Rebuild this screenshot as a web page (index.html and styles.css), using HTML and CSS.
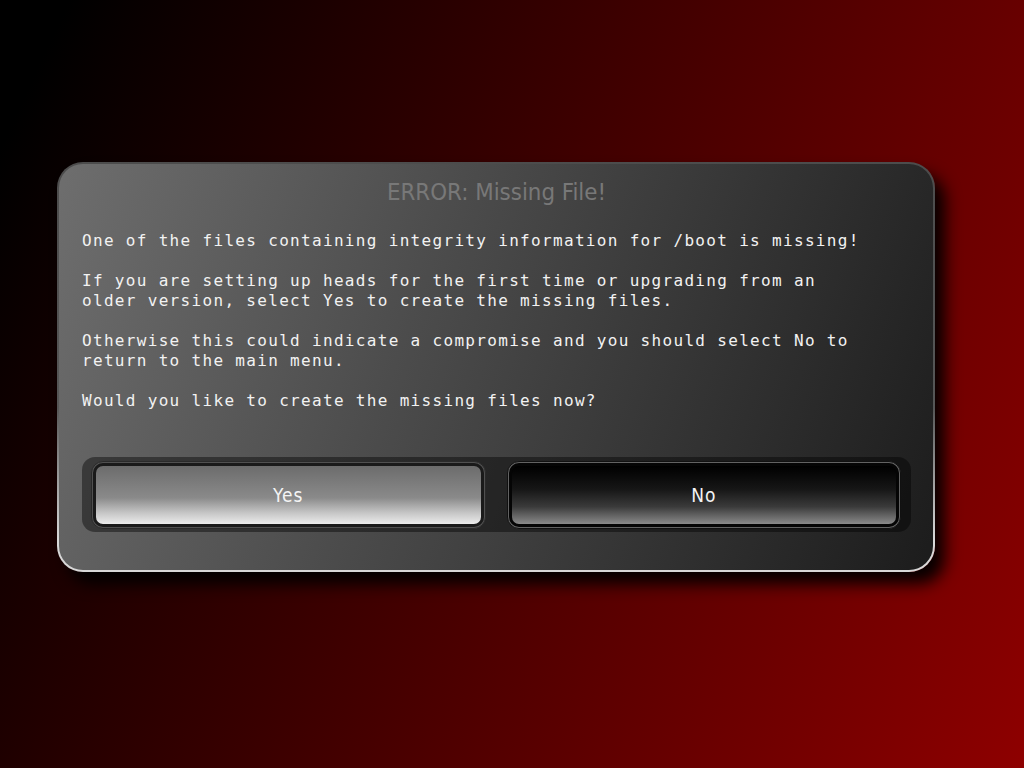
FILE: index.html
```html
<!DOCTYPE html>
<html>
<head>
<meta charset="utf-8">
<title>ERROR: Missing File!</title>
<link rel="stylesheet" href="styles.css">
</head>
<body>
<div class="screen">
  <div class="dialog">
    <div class="title">ERROR: Missing File!</div>
    <div class="message">
      <p>One of the files containing integrity information for /boot is missing!</p>
      <p>If you are setting up heads for the first time or upgrading from an<br>older version, select Yes to create the missing files.</p>
      <p>Otherwise this could indicate a compromise and you should select No to<br>return to the main menu.</p>
      <p>Would you like to create the missing files now?</p>
    </div>
    <div class="buttons">
      <div class="btn yes"><div class="face">Yes</div></div>
      <div class="btn no"><div class="face">No</div></div>
    </div>
  </div>
</div>
</body>
</html>
```
FILE: styles.css
```css
html, body {
  margin: 0;
  padding: 0;
}
body {
  width: 1024px;
  height: 768px;
  overflow: hidden;
  background: linear-gradient(115deg, #000 5%, #8e0000 100%);
}
.screen {
  box-sizing: border-box;
  width: 1024px;
  height: 768px;
  padding: 162px 0 0 57px;
}
.dialog {
  box-sizing: border-box;
  width: 878px;
  height: 410px;
  border: 2px solid transparent;
  border-radius: 26px;
  padding: 13px 22px 0 23px;
  background:
    linear-gradient(110deg, #6e6e6e 0%, #4c4c4c 40%, #1c1c1c 100%) padding-box,
    linear-gradient(180deg, #4c4c4c 0%, #565656 60%, #d8d8d8 92%) border-box;
  box-shadow: 10px 12px 16px rgba(0, 0, 0, 0.95);
}
.title {
  height: 30px;
  line-height: 30px;
  text-align: center;
  font-family: "DejaVu Sans Condensed", "DejaVu Sans", sans-serif;
  font-stretch: condensed;
  font-size: 23.8px;
  color: #787878;
}
.message {
  margin-top: 24px;
  font-family: "DejaVu Sans Mono", monospace;
  font-size: 16px;
  line-height: 20px;
  letter-spacing: 1.32px;
  color: #f2f2f2;
}
.message p {
  margin: 0 0 20px 0;
  white-space: nowrap;
}
.message p:last-child {
  margin-bottom: 0;
}
.buttons {
  margin-top: 46px;
  display: flex;
  gap: 21px;
  padding: 4px 10px 3px 9px;
  border-radius: 13px;
  background: rgba(0, 0, 0, 0.42);
}
.btn {
  flex: 1;
  height: 68px;
  box-sizing: border-box;
  border-radius: 12px;
  border: 1px solid #2a2a2a;
  padding: 1px;
  background: #505050;
}
.btn.no {
  border-color: #111;
  background: #626262;
}
.face {
  box-sizing: border-box;
  height: 100%;
  border: 3px solid #1a1a1a;
  border-radius: 10px;
  display: flex;
  align-items: center;
  justify-content: center;
  font-family: "DejaVu Sans Condensed", "DejaVu Sans", sans-serif;
  font-stretch: condensed;
  font-size: 19px;
  letter-spacing: 1px;
  color: #f4f4f4;
}
.yes .face {
  background: linear-gradient(180deg, #6c6c6c 0%, #8a8a8a 55%, #c4c4c4 80%, #ececec 100%);
}
.no .face {
  border-color: #050505;
  background: linear-gradient(180deg, #000 0%, #161616 40%, #3a3a3a 70%, #8a8a8a 100%);
}
```
